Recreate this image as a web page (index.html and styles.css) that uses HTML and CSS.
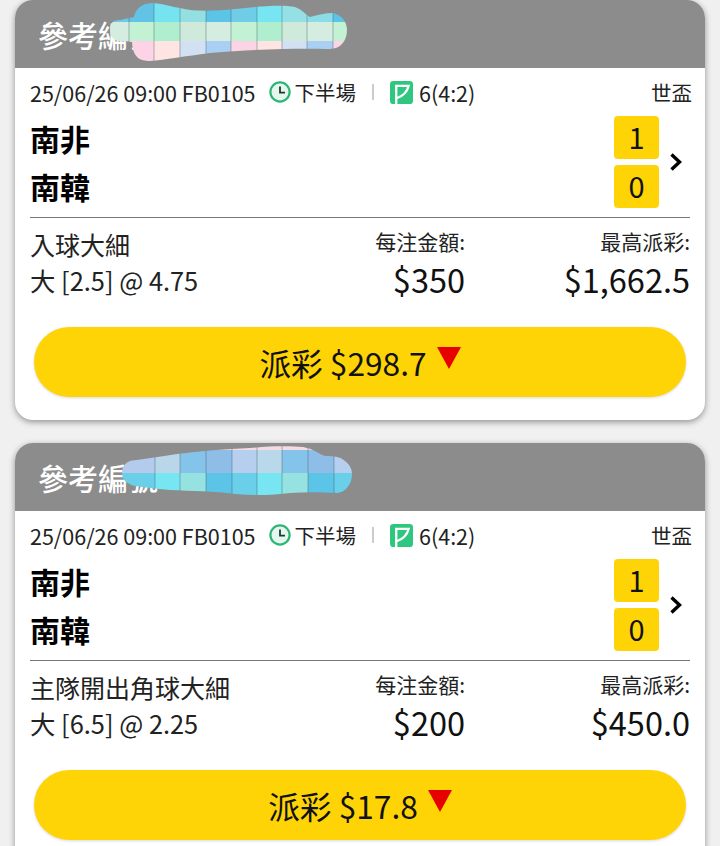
FILE: index.html
```html
<!DOCTYPE html>
<html lang="zh-Hant">
<head>
  <meta charset="UTF-8" />
  <meta name="viewport" content="width=device-width, initial-scale=1" />
  <title>注項紀錄</title>
  <link rel="stylesheet" href="styles.css">
</head>
<body>
  <div class="bet-list">

    <div class="bet-card">
      <div class="card-head">
        <span class="ref-title">參考編號</span>
        <svg class="smudge" viewBox="15 0 690 68" aria-hidden="true">
          <clipPath id="blob1">
            <path d="M110 30 C110 22 114 20 120 20 L134 17 C136 6 145 3 153 3 C165 4 172 7 180 8 C195 12 215 11 235 9 C255 7 280 4 295 7 C303 10 306 15 310 17 C318 15 325 13 333 13 C342 15 347 22 347 30 C347 40 341 49 330 49 C300 48 260 49 210 53 C185 56 165 60 150 61 C140 61 133 58 132 42 L120 41 C114 41 110 37 110 30 Z" />
          </clipPath>
          <g class="pixels" clip-path="url(#blob1)">
            <rect x="104" y="0" width="25" height="22" fill="#6ec9e8" />
            <rect x="129" y="0" width="25" height="22" fill="#62c3e6" />
            <rect x="154" y="0" width="26" height="22" fill="#75e4f0" />
            <rect x="180" y="0" width="26" height="22" fill="#93dfe2" />
            <rect x="206" y="0" width="25" height="22" fill="#5cc4e6" />
            <rect x="231" y="0" width="26" height="22" fill="#6fcde8" />
            <rect x="257" y="0" width="25" height="22" fill="#78e6f2" />
            <rect x="282" y="0" width="25" height="22" fill="#95e0e4" />
            <rect x="307" y="0" width="26" height="22" fill="#8adce6" />
            <rect x="333" y="0" width="17" height="22" fill="#5cc4e6" />
            <rect x="104" y="22" width="25" height="19" fill="#d5ece0" />
            <rect x="129" y="22" width="25" height="19" fill="#c3f1d3" />
            <rect x="154" y="22" width="26" height="19" fill="#b0eed0" />
            <rect x="180" y="22" width="26" height="19" fill="#cfeadb" />
            <rect x="206" y="22" width="25" height="19" fill="#d5ece0" />
            <rect x="231" y="22" width="26" height="19" fill="#c3f1d3" />
            <rect x="257" y="22" width="25" height="19" fill="#b0eed0" />
            <rect x="282" y="22" width="25" height="19" fill="#cfeadb" />
            <rect x="307" y="22" width="26" height="19" fill="#d5ece0" />
            <rect x="333" y="22" width="17" height="19" fill="#c3f1d3" />
            <rect x="104" y="41" width="25" height="22" fill="#9fcdf0" />
            <rect x="129" y="41" width="25" height="22" fill="#fdd4e6" />
            <rect x="154" y="41" width="26" height="22" fill="#fee4e2" />
            <rect x="180" y="41" width="26" height="22" fill="#d2e0f3" />
            <rect x="206" y="41" width="25" height="22" fill="#a9d0f2" />
            <rect x="231" y="41" width="26" height="22" fill="#fdd4e6" />
            <rect x="257" y="41" width="25" height="22" fill="#fee4e2" />
            <rect x="282" y="41" width="25" height="22" fill="#d2e0f3" />
            <rect x="307" y="41" width="26" height="22" fill="#a9d0f2" />
            <rect x="333" y="41" width="17" height="22" fill="#fdd4e6" />
            <path class="seams" d="M129 0V68M154 0V68M180 0V68M206 0V68M231 0V68M257 0V68M282 0V68M307 0V68M333 0V68" />
          </g>
        </svg>
      </div>
      <div class="card-body">
        <div class="meta-row">
          <span class="match-time">25/06/26 09:00 FB0105</span>
          <svg class="clock-icon" viewBox="0 0 24 24" aria-hidden="true">
            <circle cx="12" cy="12" r="9.6" fill="#e4f7ee" stroke="#2bb673" stroke-width="2.2" />
            <path d="M12 6.5V12.6H17" fill="none" stroke="#1c3a2c" stroke-width="1.8" />
          </svg>
          <span class="period">下半場</span>
          <span class="meta-sep"></span>
          <svg class="corner-icon" viewBox="0 0 24 24" aria-hidden="true">
            <rect width="24" height="24" rx="3.5" fill="#2fc77f" />
            <path d="M6.5 24V5H19.5C18 11 13 16 7 18" fill="none" stroke="#fff" stroke-width="2.4" />
          </svg>
          <span>6(4:2)</span>
          <span class="league">世盃</span>
        </div>
        <div class="teams-row">
          <div class="team-names">
            <div class="team-name">南非</div>
            <div class="team-name">南韓</div>
          </div>
          <div class="scores">
            <div class="score-box">1</div>
            <div class="score-box">0</div>
          </div>
          <svg class="chevron" viewBox="0 0 14 20" aria-hidden="true">
            <path d="M2.5 2.5L10.5 10L2.5 17.5" fill="none" stroke="#000" stroke-width="3.4" />
          </svg>
        </div>
        <div class="market-row">
          <div class="market-info">
            <div class="market-name">入球大細</div>
            <div class="market-pick">大 [2.5] @ 4.75</div>
          </div>
          <div class="amount-col">
            <div class="amount-label">每注金額:</div>
            <div class="amount-value">$350</div>
          </div>
          <div class="amount-col payout-col">
            <div class="amount-label">最高派彩:</div>
            <div class="amount-value">$1,662.5</div>
          </div>
        </div>
        <button class="payout-btn" type="button">派彩 $298.7<span class="down-arrow"></span></button>
      </div>
    </div>

    <div class="bet-card">
      <div class="card-head">
        <span class="ref-title">參考編號</span>
        <svg class="smudge" viewBox="15 443 690 68" aria-hidden="true">
          <clipPath id="blob2">
            <path d="M122 473 C122 464 128 460 137 460 C150 458 165 456 177 454 C200 451 225 449 250 448 C270 446 290 446 303 447 C315 449 318 454 325 456 C335 456 341 457 345 461 C350 465 352 469 352 474 C352 484 345 493 337 493 C320 492 305 492 290 493 C275 495 255 496 235 494 C215 491 190 491 170 490 C155 489 145 487 135 486 C127 484 122 480 122 473 Z" />
          </clipPath>
          <g class="pixels" clip-path="url(#blob2)">
            <rect x="120" y="443" width="232" height="8" fill="#f6dbe4" />
            <rect x="120" y="450" width="35" height="23" fill="#b4cbee" />
            <rect x="155" y="450" width="25" height="23" fill="#b9d7e8" />
            <rect x="180" y="450" width="26" height="23" fill="#85c4ea" />
            <rect x="206" y="450" width="26" height="23" fill="#8ebde8" />
            <rect x="232" y="450" width="25" height="23" fill="#b6cfee" />
            <rect x="257" y="450" width="25" height="23" fill="#b9d8ea" />
            <rect x="282" y="450" width="26" height="23" fill="#85c4ea" />
            <rect x="308" y="450" width="26" height="23" fill="#8ebde8" />
            <rect x="334" y="450" width="18" height="23" fill="#b6cfee" />
            <rect x="120" y="473" width="35" height="24" fill="#6acfe8" />
            <rect x="155" y="473" width="25" height="24" fill="#78e6f2" />
            <rect x="180" y="473" width="26" height="24" fill="#95e2e0" />
            <rect x="206" y="473" width="26" height="24" fill="#5cc4e6" />
            <rect x="232" y="473" width="25" height="24" fill="#6acfe8" />
            <rect x="257" y="473" width="25" height="24" fill="#78e6f2" />
            <rect x="282" y="473" width="26" height="24" fill="#95e2e0" />
            <rect x="308" y="473" width="26" height="24" fill="#5cc4e6" />
            <rect x="334" y="473" width="18" height="24" fill="#6acfe8" />
            <path class="seams" d="M155 443V511M180 443V511M206 443V511M232 443V511M257 443V511M282 443V511M308 443V511M334 443V511" />
          </g>
        </svg>
      </div>
      <div class="card-body">
        <div class="meta-row">
          <span class="match-time">25/06/26 09:00 FB0105</span>
          <svg class="clock-icon" viewBox="0 0 24 24" aria-hidden="true">
            <circle cx="12" cy="12" r="9.6" fill="#e4f7ee" stroke="#2bb673" stroke-width="2.2" />
            <path d="M12 6.5V12.6H17" fill="none" stroke="#1c3a2c" stroke-width="1.8" />
          </svg>
          <span class="period">下半場</span>
          <span class="meta-sep"></span>
          <svg class="corner-icon" viewBox="0 0 24 24" aria-hidden="true">
            <rect width="24" height="24" rx="3.5" fill="#2fc77f" />
            <path d="M6.5 24V5H19.5C18 11 13 16 7 18" fill="none" stroke="#fff" stroke-width="2.4" />
          </svg>
          <span>6(4:2)</span>
          <span class="league">世盃</span>
        </div>
        <div class="teams-row">
          <div class="team-names">
            <div class="team-name">南非</div>
            <div class="team-name">南韓</div>
          </div>
          <div class="scores">
            <div class="score-box">1</div>
            <div class="score-box">0</div>
          </div>
          <svg class="chevron" viewBox="0 0 14 20" aria-hidden="true">
            <path d="M2.5 2.5L10.5 10L2.5 17.5" fill="none" stroke="#000" stroke-width="3.4" />
          </svg>
        </div>
        <div class="market-row">
          <div class="market-info">
            <div class="market-name">主隊開出角球大細</div>
            <div class="market-pick">大 [6.5] @ 2.25</div>
          </div>
          <div class="amount-col">
            <div class="amount-label">每注金額:</div>
            <div class="amount-value">$200</div>
          </div>
          <div class="amount-col payout-col">
            <div class="amount-label">最高派彩:</div>
            <div class="amount-value">$450.0</div>
          </div>
        </div>
        <button class="payout-btn" type="button">派彩 $17.8<span class="down-arrow"></span></button>
      </div>
    </div>

  </div>
</body>
</html>
```

FILE: styles.css
```css
* {
  box-sizing: border-box;
}
body, html {
  margin: 0;
  padding: 0;
  height: 100vh;
  overflow: hidden;
  background: #f0f0f0;
  font-family: "Noto Sans CJK TC", "Noto Sans", sans-serif;
  color: #111;
}

.bet-list {
  display: flex;
  flex-direction: column;
  gap: 23px;
  padding: 0 15px;
}

.bet-card {
  background: #fff;
  border-radius: 18px;
  box-shadow: 0 2px 6px rgba(0, 0, 0, 0.4);
  overflow: hidden;
  flex-shrink: 0;
}

.card-head {
  position: relative;
  height: 68px;
  padding-left: 23px;
  display: flex;
  align-items: center;
  background: #8c8c8c;
}

.ref-title {
  font-size: 30px;
  font-weight: 500;
  color: #fff;
}

.smudge {
  position: absolute;
  left: 0;
  top: 0;
  width: 690px;
  height: 68px;
}

.pixels {
  filter: blur(0.5px);
}

.seams {
  fill: none;
  stroke: rgba(50, 80, 90, 0.25);
  stroke-width: 1.5;
}

.card-body {
  padding: 0 15px 23px;
}

.meta-row {
  height: 48px;
  display: flex;
  align-items: center;
  font-size: 21.5px;
  color: #222;
}

.match-time {
  margin-right: 12px;
}

.clock-icon {
  width: 24px;
  height: 24px;
  margin-right: 3px;
}

.period {
  font-size: 20.5px;
}

.meta-sep {
  width: 2px;
  height: 16px;
  margin: 0 16px;
  background: #ccc;
}

.corner-icon {
  width: 23px;
  height: 23px;
  margin-right: 6px;
}

.league {
  margin-left: auto;
  margin-right: -2px;
  font-size: 20.5px;
}

.teams-row {
  display: flex;
  align-items: flex-start;
}

.team-names {
  flex: 1;
  margin-top: -1px;
  margin-bottom: -5px;
}

.team-name {
  height: 48px;
  line-height: 47px;
  font-size: 30px;
  font-weight: 700;
  color: #000;
}

.scores {
  display: flex;
  flex-direction: column;
  gap: 6px;
}

.score-box {
  width: 45px;
  height: 43px;
  line-height: 40px;
  text-align: center;
  font-size: 29px;
  background: #ffd406;
  border-radius: 4px;
}

.chevron {
  align-self: center;
  width: 14px;
  height: 20px;
  margin: 0 7px 0 10px;
}

.market-row {
  display: flex;
  margin-top: 9px;
  padding-top: 8px;
  border-top: 1px solid #777;
  height: 110px;
}

.market-info {
  flex: 1;
}

.market-name,
.market-pick {
  height: 36px;
  line-height: 36px;
  font-size: 25px;
  color: #222;
}

.market-pick {
  font-size: 25.4px;
}

.amount-col {
  text-align: right;
}

.payout-col {
  width: 225px;
}

.amount-label {
  height: 30px;
  line-height: 30px;
  font-size: 21px;
  color: #222;
}

.amount-value {
  height: 46px;
  line-height: 46px;
  font-size: 32.5px;
  color: #111;
}

.payout-btn {
  display: flex;
  align-items: center;
  justify-content: center;
  gap: 10px;
  width: 652px;
  height: 70px;
  margin: 0 4px;
  border: none;
  border-radius: 35px;
  background: #ffd406;
  box-shadow: 0 1px 3px rgba(0, 0, 0, 0.15);
  font-family: inherit;
  font-size: 31.7px;
  color: #111;
}

.down-arrow {
  width: 0;
  height: 0;
  border-left: 12px solid transparent;
  border-right: 12px solid transparent;
  border-top: 22px solid #e60000;
  margin-bottom: 8px;
}
```
